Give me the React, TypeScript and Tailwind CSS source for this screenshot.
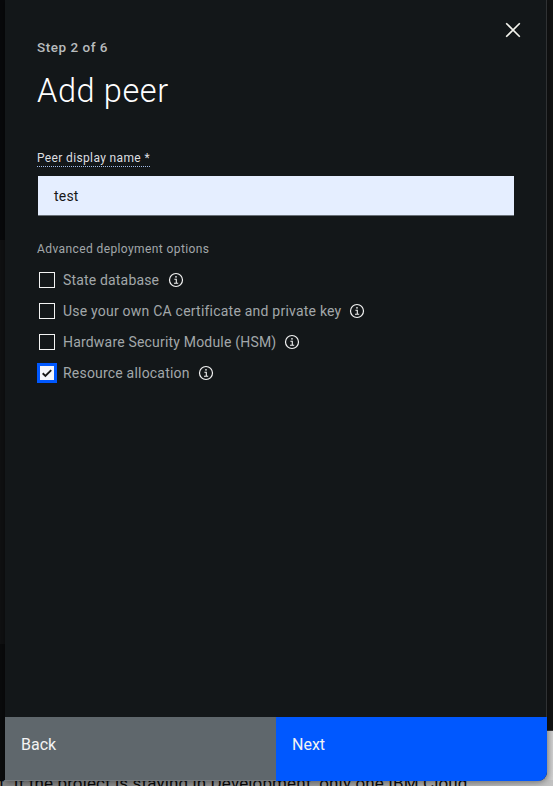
import React from "react";

const options = [
  { label: "State database", checked: false, spacing: "w-[97px] tracking-[0.17px]" },
  { label: "Use your own CA certificate and private key", checked: false, spacing: "w-[278px] tracking-[0.22px]" },
  { label: "Hardware Security Module (HSM)", checked: false, spacing: "w-[213px] tracking-[0.19px]" },
  { label: "Resource allocation", checked: true, spacing: "w-[127px] tracking-[0.2px]" },
];

function InfoIcon() {
  return (
    <svg width="16" height="16" viewBox="0 0 16 16" fill="none" className="shrink-0">
      <circle cx="8" cy="8" r="6.5" stroke="#f3f3f3" strokeWidth="1.2" />
      <path d="M6.4 7.2H8.3V11.2M6 11.2H10.2" stroke="#f3f3f3" strokeWidth="1.1" />
      <circle cx="8" cy="4.8" r="0.85" fill="#f3f3f3" />
    </svg>
  );
}

function Checkbox({ checked }: { checked: boolean }) {
  if (checked) {
    return (
      <span className="flex size-5 items-center justify-center border-3 border-[#0058ff] bg-[#f4f5fb]">
        <svg width="14" height="14" viewBox="0 0 14 14" fill="none">
          <path d="M2.7 7.3L5.4 9.9L11.2 4.1" stroke="#171717" strokeWidth="1.9" />
        </svg>
      </span>
    );
  }
  return (
    <span className="flex size-5 items-center justify-center">
      <span className="size-4 border border-[#f3f3f3]" />
    </span>
  );
}

function Backdrop() {
  return (
    <div className="absolute inset-0 flex flex-col bg-[#0a0b0c]">
      <div className="flex h-[730px] justify-between">
        <div className="flex w-[5px] flex-col">
          <div className="h-[240px] bg-[#08090b]" />
          <div className="h-[404px] bg-[#101112]" />
          <div className="grow bg-[#0a0b0c]" />
        </div>
        <div className="w-[6px] bg-[#121313]" />
      </div>
      <div className="flex h-[50px] justify-between">
        <div className="w-[5px] bg-[#0c0d0e]" />
        <div className="w-[20px] border-t border-[#333333] bg-linear-to-r from-[#9b9b9b] to-[#d0d0d0]" />
      </div>
      <div className="h-[6px] overflow-hidden bg-linear-to-r from-[#858585] via-[#999999] to-[#c2c2c2]">
        <p className="-mt-[7px] -ml-[1px] text-[17px] leading-[20px] tracking-[0.13px] whitespace-nowrap text-[#090909]">
          t. If the project is staying in Development, only one IBM Cloud
        </p>
      </div>
    </div>
  );
}

export default function App() {
  return (
    <div className="relative h-[786px] w-[553px] overflow-hidden pl-[5px] font-[Roboto,sans-serif]">
      <Backdrop />
      <section className="relative flex h-[781px] w-[542px] flex-col overflow-hidden rounded-br-[9px] bg-[#131719] shadow-[0_1px_7px_rgba(0,0,0,0.45)]">
        <div className="flex grow flex-col border-r border-[#303234] px-8">
          <header className="flex justify-between">
            <div>
              <p className="mt-[38px] text-[13.5px] leading-[18px] font-medium tracking-[0.52px] text-[#b8bcbe]">Step 2 of 6</p>
              <h1 className="mt-[15px] text-[32.5px] leading-10 font-light tracking-[0.6px] text-white">Add peer</h1>
            </div>
            <button aria-label="Close" className="mt-5 -mr-[9px] h-5 w-5">
              <svg width="20" height="20" viewBox="0 0 20 20" fill="none">
                <path d="M3.2 3.2L16.8 16.8M16.8 3.2L3.2 16.8" stroke="#f5f5ee" strokeWidth="1.6" />
              </svg>
            </button>
          </header>
          <label className="mt-[39px] h-[17px] w-[113px] self-start border-b border-dotted border-[#a4bde8] text-[12px] leading-4 tracking-[0.36px] whitespace-nowrap text-[#dddfe0]">
            Peer display name *
          </label>
          <div className="mt-[9px] ml-[1px] flex h-10 w-[476px] items-center border-b border-[#697077] bg-[#e5eeff] pt-[2px] pl-4 text-[14px] tracking-[0.2px] text-[#171717]">
            test
          </div>
          <p className="mt-[24px] text-[12px] leading-[18px] tracking-[0.4px] text-[#a2a7aa]">Advanced deployment options</p>
          <div className="mt-[12px] flex flex-col gap-[11px]">
            {options.map((o) => (
              <div key={o.label} className="flex h-5 items-center">
                <Checkbox checked={o.checked} />
                <span className={`ml-[6px] mr-[8px] text-[14px] leading-5 whitespace-nowrap text-[#a2a7aa] ${o.spacing}`}>{o.label}</span>
                <InfoIcon />
              </div>
            ))}
          </div>
        </div>
        <footer className="grid h-16 shrink-0 grid-cols-2 border-b border-[#777c80] text-[16px] leading-5 text-[#f3f3f3]">
          <button className="bg-[#5f676c] px-4 pb-[8px] text-left">Back</button>
          <button className="-mb-px bg-[#0058ff] px-4 pb-[9px] text-left">Next</button>
        </footer>
      </section>
    </div>
  );
}
